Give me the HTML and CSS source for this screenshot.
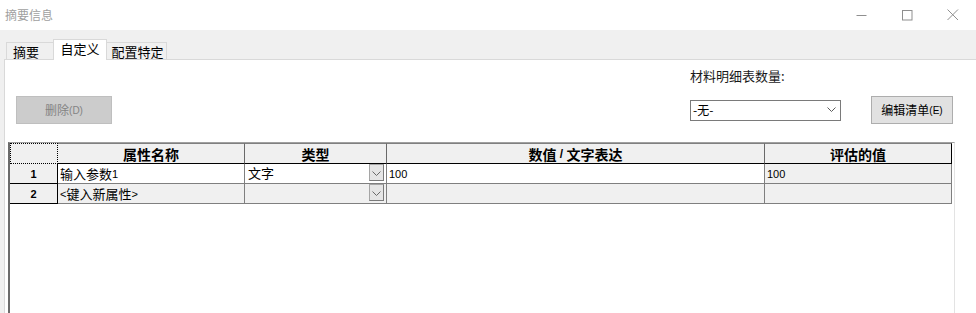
FILE: index.html
```html
<!DOCTYPE html>
<html lang="zh">
<head>
<meta charset="utf-8">
<title>摘要信息</title>
<link rel="stylesheet" href="styles.css">
</head>
<body>
<div class="window">
  <div class="titlebar">
    <span class="title">摘要信息</span>
    <div class="controls">
      <span class="ctl"><svg width="11" height="11" viewBox="0 0 11 11"><path d="M0.5 5.5H10.5" stroke="#8f8f8f" stroke-width="1" fill="none"/></svg></span>
      <span class="ctl"><svg width="11" height="11" viewBox="0 0 11 11"><rect x="0.5" y="0.5" width="9.5" height="9.5" stroke="#8f8f8f" stroke-width="1" fill="none"/></svg></span>
      <span class="ctl"><svg width="12" height="12" viewBox="0 0 12 12"><path d="M0.5 0.5L11 11M11 0.5L0.5 11" stroke="#8f8f8f" stroke-width="1" fill="none"/></svg></span>
    </div>
  </div>
  <div class="tabs">
    <div class="tab first">摘要</div>
    <div class="tab active">自定义</div>
    <div class="tab last">配置特定</div>
  </div>
  <div class="panel">
    <div class="toolbar">
      <button class="btn btn-disabled">删除<span class="acc">(D)</span></button>
      <div class="bom">
        <div class="bom-label">材料明细表数量:</div>
        <div class="bom-row">
          <div class="select"><span class="select-text">-无-</span><svg class="chev" width="9" height="6" viewBox="0 0 9 6"><path d="M0.5 0.5L4.5 4.5L8.5 0.5" stroke="#5a5a5a" stroke-width="1" fill="none"/></svg></div>
          <button class="btn">编辑清单<span class="acc">(E)</span></button>
        </div>
      </div>
    </div>
    <div class="grid-box">
      <div class="grid">
        <div class="cell corner"></div>
        <div class="cell hd">属性名称</div>
        <div class="cell hd">类型</div>
        <div class="cell hd">数值<span class="lat"> / </span>文字表达</div>
        <div class="cell hd hd-last">评估的值</div>

        <div class="cell rh">1</div>
        <div class="cell dc white"><span class="cjk">输入参数</span>1</div>
        <div class="cell dc white combo"><span class="cjk">文字</span><span class="dd"><svg width="9" height="6" viewBox="0 0 9 6"><path d="M0.5 0.5L4.5 4.5L8.5 0.5" stroke="#6a6a6a" stroke-width="1" fill="none"/></svg></span></div>
        <div class="cell dc white">100</div>
        <div class="cell dc gray">100</div>

        <div class="cell rh">2</div>
        <div class="cell dc gray">&lt;<span class="cjk">键入新属性</span>&gt;</div>
        <div class="cell dc gray combo"><span></span><span class="dd"><svg width="9" height="6" viewBox="0 0 9 6"><path d="M0.5 0.5L4.5 4.5L8.5 0.5" stroke="#6a6a6a" stroke-width="1" fill="none"/></svg></span></div>
        <div class="cell dc gray"></div>
        <div class="cell dc gray"></div>
      </div>
    </div>
  </div>
</div>
</body>
</html>
```

FILE: styles.css
```css
* { box-sizing: border-box; }
html, body {
  margin: 0;
  padding: 0;
}
body {
  width: 976px;
  height: 313px;
  overflow: hidden;
  background: #f0f0f0;
  font-family: "Noto Sans CJK SC", sans-serif;
  color: #000;
}
.window {
  display: flex;
  flex-direction: column;
  height: 313px;
}
.titlebar {
  height: 30px;
  background: #fff;
  display: flex;
  align-items: center;
  justify-content: space-between;
  padding-left: 5px;
  flex: none;
}
.title {
  font-size: 12px;
  color: #a0a0a0;
  line-height: 16px;
}
.controls {
  display: flex;
  height: 30px;
}
.ctl {
  width: 46px;
  height: 30px;
  display: flex;
  align-items: center;
  justify-content: center;
}
.tabs {
  height: 29px;
  display: flex;
  align-items: flex-end;
  padding-left: 6px;
  flex: none;
}
.tab {
  height: 17px;
  border: 1px solid #d9d9d9;
  border-bottom: none;
  background: #f0f0f0;
  font-size: 13px;
  line-height: 15px;
  display: flex;
  align-items: center;
  justify-content: center;
}
.tab.first {
  width: 48px;
  justify-content: flex-start;
  padding-left: 6px;
}
.tab.active {
  width: 54px;
  height: 21px;
  margin-left: -1px;
  margin-bottom: -1px;
  background: #fff;
  position: relative;
  z-index: 1;
  padding-bottom: 3px;
}
.tab.last {
  width: 61px;
  margin-left: -1px;
  padding-left: 2px;
}
.panel {
  flex: 1;
  margin-left: 4px;
  background: #fff;
  border-left: 1px solid #d9d9d9;
  border-top: 1px solid #d9d9d9;
  display: flex;
  flex-direction: column;
  min-height: 0;
}
.toolbar {
  height: 82px;
  display: flex;
  justify-content: space-between;
  padding: 0 23px 0 11px;
  flex: none;
}
.btn {
  height: 28px;
  border: 1px solid #adadad;
  background: #e1e1e1;
  font-family: "Noto Sans CJK SC", sans-serif;
  font-size: 12px;
  color: #000;
  padding: 0;
  display: flex;
  align-items: center;
  justify-content: center;
  line-height: 14px;
}
.btn .acc {
  font-family: "Liberation Sans", sans-serif;
  font-size: 10px;
  padding-top: 2px;
}
.btn-disabled {
  width: 96px;
  margin-top: 36px;
  background: #cccccc;
  border-color: #bfbfbf;
  color: #838383;
}
.bom {
  display: flex;
  flex-direction: column;
  width: 263px;
}
.bom-label {
  margin-top: 8px;
  font-size: 13px;
  line-height: 16px;
  color: #1a1a1a;
}
.bom-row {
  margin-top: 12px;
  display: flex;
  align-items: center;
  gap: 30px;
}
.bom-row .btn {
  width: 82px;
}
.select {
  width: 151px;
  height: 21px;
  border: 1px solid #7a7a7a;
  background: #fff;
  display: flex;
  align-items: center;
  justify-content: space-between;
  padding: 0 4px 0 2px;
}
.select-text {
  font-size: 12px;
  line-height: 14px;
}
.grid-box {
  flex: 1;
  margin-left: 3px;
  width: 947px;
  border-left: 2px solid #6b6b6b;
  border-top: 1px solid #a0a0a0;
  border-right: 1px solid #e3e3e3;
  background: #fff;
}
.grid {
  display: grid;
  grid-template-columns: 48px 187px 142px 378px 187px;
  grid-template-rows: 21px 20px 20px;
  width: 942px;
}
.cell {
  border-right: 1px solid #7f7f7f;
  border-bottom: 1px solid #7f7f7f;
  font-family: "Liberation Sans", "Noto Sans CJK SC", sans-serif;
  font-size: 11px;
  line-height: 14px;
  display: flex;
  align-items: center;
  white-space: nowrap;
  overflow: hidden;
}
.cjk {
  font-family: "Noto Sans CJK SC", sans-serif;
  font-size: 13px;
}
.corner {
  border: 1px dotted #000;
  background: #f0f0f0;
}
.hd {
  border-top: 1px solid #7f7f7f;
  border-right-color: #696969;
  border-bottom-color: #000;
  background: #f0f0f0;
  justify-content: center;
  font-family: "Noto Sans CJK SC", sans-serif;
  font-size: 14px;
  font-weight: bold;
  line-height: 16px;
}
.hd .lat {
  font-family: "Liberation Sans", sans-serif;
  font-size: 12px;
  white-space: pre;
}
.hd-last {
  border-right-color: #000;
}
.rh {
  background: #f0f0f0;
  justify-content: center;
  font-weight: bold;
  border-right-color: #000;
  border-bottom-color: #000;
}
.dc {
  padding-left: 2px;
}
.white { background: #fff; }
.gray { background: #f0f0f0; }
.combo {
  justify-content: space-between;
  align-items: flex-start;
  padding-left: 3px;
  padding-right: 2px;
}
.combo .cjk {
  line-height: 18px;
}
.dd {
  width: 15px;
  height: 17px;
  background: #e5e5e5;
  border: 1px solid #a5a5a5;
  border-right-color: #7a7a7a;
  border-bottom-color: #7a7a7a;
  display: flex;
  align-items: center;
  justify-content: center;
  padding-top: 2px;
}
```
